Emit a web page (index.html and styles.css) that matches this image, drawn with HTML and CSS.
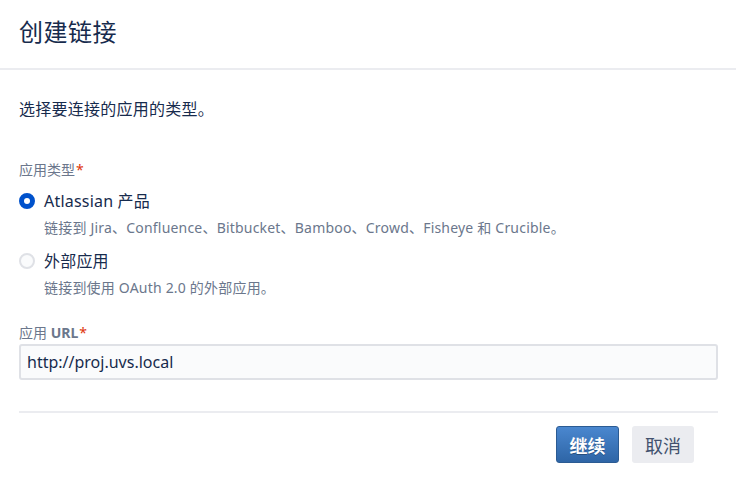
FILE: index.html
```html
<!DOCTYPE html>
<html lang="zh-CN">
<head>
<meta charset="utf-8">
<title>创建链接</title>
<link rel="stylesheet" href="styles.css">
</head>
<body>
<div class="dialog">
  <header class="dialog-header">
    <h1 class="dialog-title">创建链接</h1>
  </header>
  <div class="dialog-body">
    <p class="intro">选择要连接的应用的类型。</p>
    <div class="field">
      <div class="field-label">应用类型<span class="req">*</span></div>
      <div class="radio-row">
        <span class="radio radio-on"></span>
        <div class="radio-text">
          <div class="radio-title">Atlassian 产品</div>
          <div class="radio-desc">链接到 Jira、Confluence、Bitbucket、Bamboo、Crowd、Fisheye 和 Crucible。</div>
        </div>
      </div>
      <div class="radio-row radio-row-2">
        <span class="radio"></span>
        <div class="radio-text">
          <div class="radio-title">外部应用</div>
          <div class="radio-desc">链接到使用 OAuth 2.0 的外部应用。</div>
        </div>
      </div>
    </div>
    <div class="field field-url">
      <div class="field-label">应用 <b class="url">URL</b><span class="req">*</span></div>
      <div class="input">http://proj.uvs.local</div>
    </div>
  </div>
  <footer class="dialog-footer">
    <button class="btn btn-primary">继续</button>
    <button class="btn btn-default">取消</button>
  </footer>
</div>
</body>
</html>
```
FILE: styles.css
```css
* { box-sizing: border-box; }
html, body { margin: 0; padding: 0; background: #fff; }
body {
  font-family: "Noto Sans", "Noto Sans CJK SC", sans-serif;
  color: #172b4d;
  width: 736px;
  height: 489px;
  overflow: hidden;
}
.dialog { display: flex; flex-direction: column; }
.dialog-header {
  height: 70px;
  border-bottom: 2px solid #ebecf0;
  padding: 15px 19px 0;
}
.dialog-title {
  margin: 0;
  font-size: 24px;
  font-weight: 400;
  line-height: 34px;
  letter-spacing: 0.5px;
  color: #172b4d;
}
.dialog-body { padding: 0 18px 0 19px; }
.intro {
  margin: 28px 0 0;
  font-size: 16px;
  line-height: 22px;
  letter-spacing: 0.25px;
  color: #172b4d;
}
.field { margin-top: 41px; }
.field-label {
  font-size: 14px;
  line-height: 18px;
  color: #6b778c;
}
.field-label .url { font-weight: 700; }
.req { color: #de350b; margin-left: 1px; }
.radio-row { display: flex; align-items: flex-start; margin-top: 11px; }
.radio-row-2 { margin-top: 12px; }
.radio {
  flex: none;
  width: 16px;
  height: 16px;
  margin-top: 3px;
  border-radius: 50%;
  border: 2px solid #dfe1e6;
  background: #fafbfc;
  position: relative;
}
.radio-on { border-color: #0052cc; background: #0052cc; }
.radio-on::after {
  content: "";
  position: absolute;
  left: 3px; top: 3px;
  width: 6px; height: 6px;
  border-radius: 50%;
  background: #fff;
}
.radio-text { margin-left: 9px; }
.radio-title { font-size: 16px; line-height: 22px; letter-spacing: 0.2px; color: #172b4d; }
.radio-desc { font-size: 14px; line-height: 20px; margin-top: 6px; letter-spacing: 0.2px; color: #6b778c; }
.field-url { margin-top: 26px; }
.input {
  margin-top: 2px;
  height: 36px;
  border: 2px solid #dfe1e6;
  border-radius: 3px;
  background: #fafbfc;
  padding: 0 6px;
  font-size: 16px;
  line-height: 32px;
  color: #172b4d;
}
.dialog-footer {
  margin: 31px 18px 0 19px;
  border-top: 2px solid #ebecf0;
  padding-top: 13px;
  display: flex;
  justify-content: flex-end;
  gap: 13px;
  padding-right: 24px;
}
.btn {
  font-family: "Noto Sans CJK SC", sans-serif;
  font-size: 18px;
  height: 37px;
  width: 63px;
  border-radius: 3px;
  border: none;
  padding: 0;
  cursor: pointer;
}
.btn-primary {
  color: #fff;
  font-weight: 700;
  background: linear-gradient(#4a87cf, #2e65a6);
  border: 1px solid #2b5b93;
  text-shadow: 0 1px 0 rgba(0,0,0,0.3);
}
.btn-default {
  width: 62px;
  color: #42526e;
  background: #ebecf0;
}
```
